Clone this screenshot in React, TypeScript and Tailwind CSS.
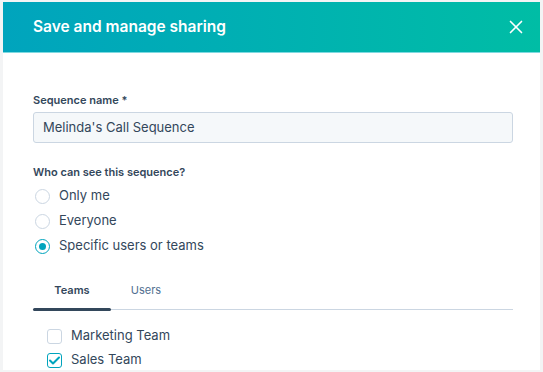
import { X } from 'lucide-react';

const radioOptions = [
  { label: 'Only me', checked: false },
  { label: 'Everyone', checked: false },
  { label: 'Specific users or teams', checked: true },
];

const teams = [
  { name: 'Marketing Team', checked: false },
  { name: 'Sales Team', checked: true },
];

export default function App() {
  return (
    <div className="w-[543px] h-[372px] bg-[#f3f4f5] pt-[2px] px-[3px] overflow-hidden font-['Inter',sans-serif] text-[#33475b]">
      <div className="w-[537px] h-[368px] bg-white flex flex-col overflow-hidden">
        {/* Header */}
        <div className="h-[51px] flex items-center justify-between pl-[30px] pr-[13px] bg-gradient-to-r from-[#00a4bd] to-[#00bda5] border-b border-[#7fd9e0] shrink-0">
          <h1 className="text-white text-[15.5px] font-semibold">Save and manage sharing</h1>
          <X size={22} strokeWidth={1.8} className="text-white" />
        </div>

        {/* Body */}
        <div className="pl-[30px] pr-[25px] pt-[40px]">
          <label className="block text-[11px] font-semibold leading-[14px]">Sequence name *</label>
          <div className="mt-[5px] h-[31px] w-[480px] flex items-center px-[9px] bg-[#f5f8fa] border border-[#cbd6e2] rounded-[3px] text-[13px]">
            Melinda's Call Sequence
          </div>

          <p className="mt-[22px] text-[11px] font-semibold leading-[14px]">Who can see this sequence?</p>
          <div className="mt-[9px] flex flex-col gap-[9px]">
            {radioOptions.map((opt) => (
              <div key={opt.label} className="flex items-center gap-[9px] h-[16px] pl-[2px]">
                <span
                  className={`w-[15px] h-[15px] rounded-full border flex items-center justify-center ${
                    opt.checked ? 'border-[#00a4bd] border-[1.5px]' : 'border-[#cbd6e2]'
                  }`}
                >
                  {opt.checked && <span className="w-[7px] h-[7px] rounded-full bg-[#00a4bd]" />}
                </span>
                <span className="text-[13px]">{opt.label}</span>
              </div>
            ))}
          </div>

          {/* Tabs */}
          <div className="mt-[28px] w-[480px] flex border-b border-[#cbd6e2]">
            <div className="w-[78px] flex justify-center pb-[10px] relative">
              <span className="text-[11px] font-semibold">Teams</span>
              <span className="absolute left-0 right-0 -bottom-[2px] h-[3px] rounded-full bg-[#33475b]" />
            </div>
            <div className="w-[70px] flex justify-center pb-[10px]">
              <span className="text-[11px] text-[#516f90]">Users</span>
            </div>
          </div>

          <div className="mt-[19px] pl-[14px] flex flex-col gap-[9px]">
            {teams.map((t) => (
              <div key={t.name} className="flex items-center gap-[9px] h-[15px]">
                <span
                  className={`w-[15px] h-[15px] rounded-[3px] border flex items-center justify-center ${
                    t.checked ? 'border-[#00a4bd] border-[1.5px]' : 'border-[#cbd6e2]'
                  }`}
                >
                  {t.checked && (
                    <svg width="11" height="9" viewBox="0 0 11 9" fill="none">
                      <path d="M1 4.5L4 7.5L10 1.5" stroke="#00a4bd" strokeWidth="2" strokeLinecap="round" strokeLinejoin="round" />
                    </svg>
                  )}
                </span>
                <span className="text-[13px]">{t.name}</span>
              </div>
            ))}
          </div>
        </div>
      </div>
    </div>
  );
}
